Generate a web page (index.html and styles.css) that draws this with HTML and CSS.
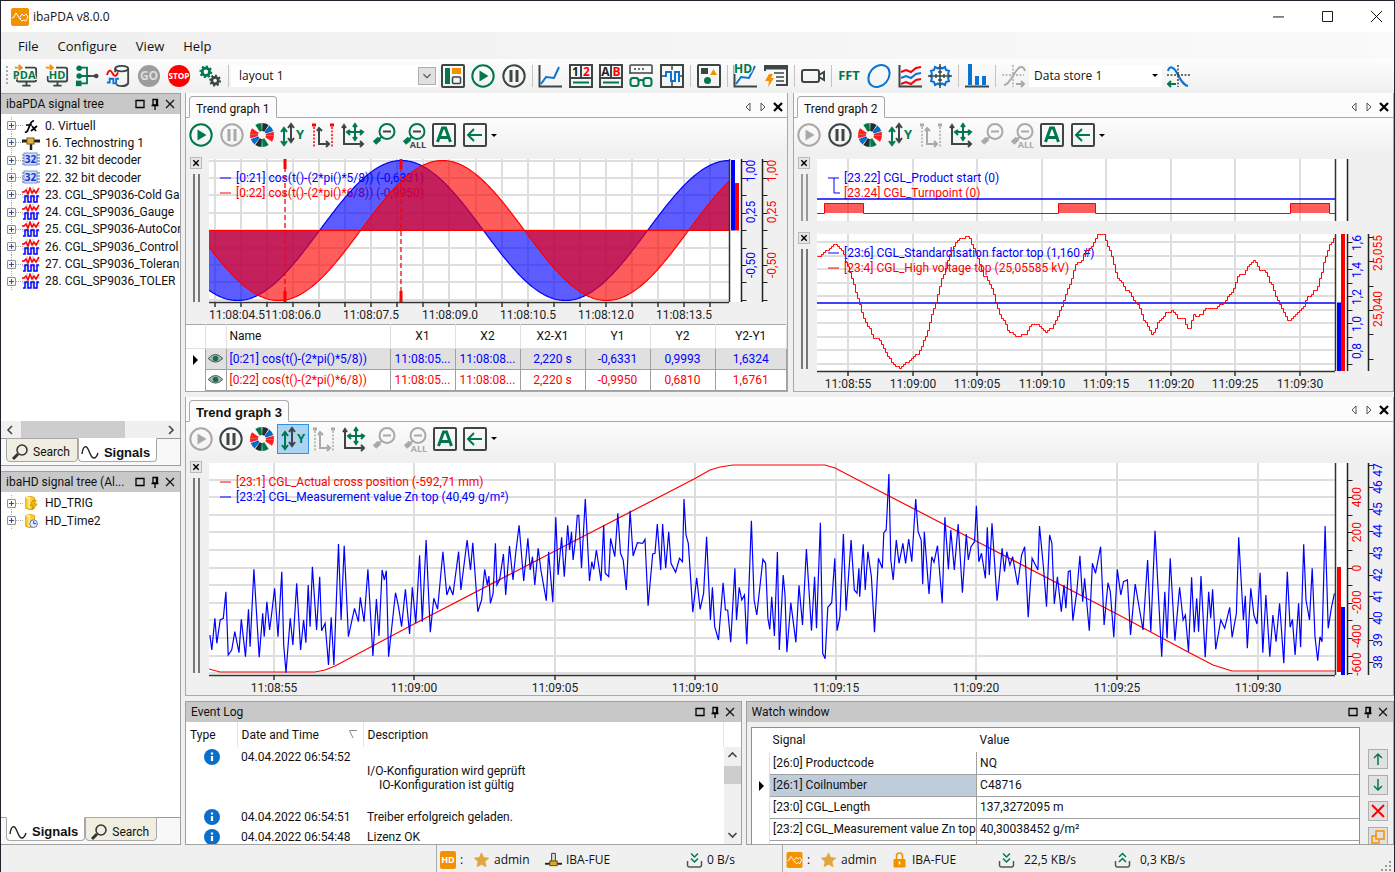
FILE: index.html
```html
<!DOCTYPE html>
<html lang="en">

<head>
    <meta charset="UTF-8">
    <title>ibaPDA v8.0.0</title>
    <link rel="stylesheet" href="styles.css">
</head>

<body>
    <!-- icon set -->
    <svg class="sprite" aria-hidden="true">
        <symbol id="logo" viewBox="0 0 18 18">
            <rect width="18" height="18" rx="2" fill="#f39200" />
            <path d="M1 10l2-1 2-4 2 3 2 3 1-1M9 9l2-3 2 2 2-2 2 3-2 4-2-1-2 1-2-2" fill="none" stroke="#fff" stroke-width="1" />
        </symbol>
        <symbol id="pda" viewBox="0 0 26 24">
            <path d="M12 3h10q2 0 2 2v11q0 2-2 2H5q-2 0-2-2v-4M9 22.500h9M13.500 18v4" class="k" />
            <path d="M1 3h7M5 0l3.500 3L5 6" class="o" />
            <text x="11" y="15" class="badge">PDA</text>
        </symbol>
        <symbol id="hd" viewBox="0 0 26 24">
            <path d="M12 3h10q2 0 2 2v11q0 2-2 2H5q-2 0-2-2v-4M9 22.500h9M13.500 18v4" class="k" />
            <path d="M1 3h7M5 0l3.500 3L5 6" class="o" />
            <text x="13" y="15" class="badge">HD</text>
        </symbol>
        <symbol id="io" viewBox="0 0 26 24">
            <path d="M4 3h9v17H5M4 12h12" class="g" />
            <path d="M14 12h8" class="k" />
            <circle cx="4.500" cy="3.500" r="3" class="gf" />
            <circle cx="4.500" cy="12" r="3" class="gf" />
            <rect x="1" y="17" width="6" height="6" class="gf" />
            <circle cx="23" cy="12" r="2.500" class="kf" />
        </symbol>
        <symbol id="store" viewBox="0 0 26 24">
            <ellipse cx="17" cy="4" rx="7" ry="3" class="k" />
            <path d="M24 4v16q-2 3-7 3-4 0-6-2M10 4v4" class="k" />
            <path d="M1 11c2-6 4-6 6-2s4 4 6-1" class="r" />
            <path d="M1 19h3v-4h4v5h3v-5h3" class="b" />
        </symbol>
        <symbol id="go" viewBox="0 0 26 24">
            <circle cx="13" cy="12" r="12" fill="#9d9d9d" />
            <text x="13" y="16.500" class="round-txt go-txt">GO</text>
        </symbol>
        <symbol id="stop" viewBox="0 0 26 24">
            <circle cx="13" cy="12" r="12" fill="#f00" />
            <text x="13" y="15.500" class="round-txt">STOP</text>
        </symbol>
        <symbol id="gears" viewBox="0 0 26 24">
            <circle cx="8.500" cy="7.500" r="4" class="g" stroke-width="3" />
            <circle cx="8.500" cy="7.500" r="6" class="g" stroke-width="2" pathLength="16" stroke-dasharray="1 1" />
            <circle cx="18.500" cy="17" r="3.500" class="k" stroke-width="3" />
            <circle cx="18.500" cy="17" r="5.500" class="k" stroke-width="2" pathLength="16" stroke-dasharray="1 1" />
        </symbol>
        <symbol id="layout" viewBox="0 0 24 24">
            <rect x="1" y="1" width="22" height="22" rx="1" class="k" />
            <rect x="4" y="4" width="5" height="16" class="gf" />
            <rect x="11" y="4" width="9" height="6" fill="#f39200" />
            <rect x="11.500" y="13" width="8" height="6.500" rx="1" class="k thin" />
        </symbol>
        <symbol id="play" viewBox="0 0 24 24">
            <circle cx="12" cy="12" r="10.700" class="g" />
            <path d="M8.500 6.500v11l9-5.500z" class="gf" />
        </symbol>
        <symbol id="pause" viewBox="0 0 24 24">
            <circle cx="12" cy="12" r="10.700" class="k" />
            <path d="M9 6v12M15 6v12" class="k" stroke-width="3" />
        </symbol>
        <symbol id="trend" viewBox="0 0 24 24">
            <path d="M1.500 1v21.500H24" class="k" />
            <path d="M3 20l5-7 8 1 5-11" class="b" />
        </symbol>
        <symbol id="digits" viewBox="0 0 24 24">
            <path d="M1 1h22v22H1zM1 14h22M12 1v13" class="k" />
            <text x="6.500" y="11.500" class="cell">1</text><text x="17.500" y="11.500" class="cell red">2</text>
            <path d="M4 18.500h16" class="g" />
        </symbol>
        <symbol id="letters" viewBox="0 0 24 24">
            <path d="M1 1h22v22H1zM1 14h22M12 1v13" class="k" />
            <text x="6.500" y="11.500" class="cell">A</text><text x="17.500" y="11.500" class="cell red">B</text>
            <path d="M4 18.500h16" class="g" />
        </symbol>
        <symbol id="glasses" viewBox="0 0 24 24">
            <path d="M1 10V2q0-1 1-1h20q1 0 1 1v8M1 9h22" class="k thin" />
            <path d="M5 5h2M9 5h2M13 5h2" class="k thin" />
            <rect x="1.500" y="14" width="8" height="8" rx="2.500" class="g" />
            <rect x="14.500" y="14" width="8" height="8" rx="2.500" class="g" />
            <path d="M9 17q3-2 6 0" class="g" />
        </symbol>
        <symbol id="scope" viewBox="0 0 24 24">
            <rect x="1" y="1" width="22" height="22" class="k" />
            <path d="M12 1v5M12 18v5M1 12h4M19 12h4" class="k thin" />
            <path d="M4 12h2V8h5v9h4V8h4v9h1" class="b" />
        </symbol>
        <symbol id="shapes" viewBox="0 0 24 24">
            <rect x="1" y="1" width="22" height="22" rx="1" class="k" />
            <rect x="4" y="4" width="7" height="6" class="kf" />
            <path d="M16.500 5l3.500 6h-7z" fill="#f39200" />
            <circle cx="10.500" cy="16.500" r="3.500" class="gf" />
        </symbol>
        <symbol id="hdtrend" viewBox="0 0 24 24">
            <path d="M1.500 1v21.500H24" class="k" />
            <path d="M3 20l5-7 8 1 6-12" class="b" />
            <text x="10" y="9" class="badge">HD</text>
        </symbol>
        <symbol id="hdevent" viewBox="0 0 24 24">
            <path d="M1 7V2h22v19H12" class="k" />
            <path d="M1 4h22" class="k" stroke-width="3" />
            <path d="M10 9h10M12 13h8M12 17h8" class="k thin" />
            <path d="M5 10H9L7 14h3l-6 9 1-6H1z" fill="#f39200" />
        </symbol>
        <symbol id="camera" viewBox="0 0 24 24">
            <rect x="1" y="6" width="17" height="12" rx="2" class="k" />
            <path d="M18 11l5-3v8l-5-3" class="k" />
        </symbol>
        <symbol id="fft" viewBox="0 0 26 24">
            <text x="13" y="16" class="fft-txt">FFT</text>
        </symbol>
        <symbol id="orbit" viewBox="0 0 24 24">
            <ellipse cx="12" cy="12" rx="12" ry="9.500" transform="rotate(-50 12 12)" class="b" />
        </symbol>
        <symbol id="waterfall" viewBox="0 0 24 24">
            <path d="M1.500 1v21.500H24" class="k" />
            <path d="M3 8l5-2 5 2 5-4 5-1M3 20l5-2 5 2 5-4 5-1" class="r" />
            <path d="M3 14l5-2 5 2 5-4 5-1" class="b" />
        </symbol>
        <symbol id="polar" viewBox="0 0 24 24">
            <path d="M12 3l2 1.500 3-1.500 1 3 3 1-1 3 1.500 2-1.500 2 1 3-3 1-1 3-3-1.500-2 1.500-2-1.500-3 1.500-1-3-3-1 1-3-1.500-2 1.500-2-1-3 3-1 1-3 3 1.500z" class="b" />
            <path d="M12 0v24M0 12h24M8 10v4M16 10v4M10 8h4M10 16h4" class="k thin" />
        </symbol>
        <symbol id="bars" viewBox="0 0 24 24">
            <path d="M0 22.500h24" class="k" />
            <path d="M5 0v21M12 12v9M19 12v9" class="b" stroke-width="4" />
        </symbol>
        <symbol id="replay" viewBox="0 0 24 24">
            <path d="M2 21C9 21 13 3 19 3q3 0 4 4" class="b" />
            <path d="M11 1v22M0 11h22" class="k thin" stroke-dasharray="2 1.500" />
            <path d="M14 20h8M19 17l3 3-3 3" class="g" />
        </symbol>
        <symbol id="replayback" viewBox="0 0 24 24">
            <path d="M2 7c1-6 6-4 9 2s6 12 11 13" class="b" />
            <path d="M12 1v22M1 11h23" class="k thin" stroke-dasharray="2 1.500" />
            <path d="M10 20H2M5 17l-3 3 3 3" class="g" />
        </symbol>
        <symbol id="wheel" viewBox="0 0 24 24">
            <g fill="none" stroke-width="8" transform="rotate(-90 12 12)">
                <circle cx="12" cy="12" r="8" pathLength="10" stroke="#1f2f2f" stroke-dasharray=".88 4.120" stroke-dashoffset="-.06" />
                <circle cx="12" cy="12" r="8" pathLength="10" stroke="#006fc9" stroke-dasharray=".88 4.120" stroke-dashoffset="-1.060" />
                <circle cx="12" cy="12" r="8" pathLength="10" stroke="#ff1f1f" stroke-dasharray=".88 4.120" stroke-dashoffset="-2.560" />
                <circle cx="12" cy="12" r="8" pathLength="10" stroke="#ff1f1f" stroke-dasharray=".5 4.500" stroke-dashoffset="-2.060" />
                <circle cx="12" cy="12" r="8" pathLength="10" stroke="#00784b" stroke-dasharray=".88 4.120" stroke-dashoffset="-4.060" />
            </g>
        </symbol>
        <symbol id="yscale" viewBox="0 0 24 24">
            <path d="M4 6v15M1 9l3-4 3 4M1 18l3 4 3-4" class="g" />
            <path d="M11 2v16M8 5l3-4 3 4M8 15l3 4 3-4" class="k" />
            <text x="20" y="16" class="axis-y">Y</text>
        </symbol>
        <symbol id="xrange" viewBox="0 0 24 24">
            <path d="M3 4v20M21 4v20" class="r thin" stroke-dasharray="2 1.500" />
            <path d="M1 2h4M19 2h4" class="r" stroke-width="3" />
            <path d="M8 5v16h10M6 8l2-3 3 3M15 18l3 3-3 3" class="k" />
        </symbol>
        <symbol id="move" viewBox="0 0 24 24">
            <path d="M3 2v19h19M1 5l2-3 2 3M19 18l3 3-3 3" class="k" />
            <path d="M14 2v15M6 9h16M12 4l2-3 2 3M12 14l2 3 2-3M9 7L6 9l3 3M19 7l3 2-3 3" class="g" />
        </symbol>
        <symbol id="zoomout" viewBox="0 0 24 24">
            <circle cx="15" cy="8.500" r="7.500" class="g" />
            <path d="M11 8.500h8" class="k" />
            <path d="M9.500 14L7 16" class="g" />
            <path d="M7.500 15.500L2.500 20" class="g" stroke-width="5" />
        </symbol>
        <symbol id="zoomall" viewBox="0 0 24 24">
            <circle cx="15" cy="8.500" r="7.500" class="g" />
            <path d="M11 8.500h8" class="k" />
            <path d="M9.500 14l-2 2" class="g" />
            <path d="M7.500 15.500L2.500 20" class="g" stroke-width="5" />
            <text x="16" y="25" class="all">ALL</text>
        </symbol>
        <symbol id="auto" viewBox="0 0 24 24">
            <rect x="1" y="1" width="22" height="22" rx="1" class="k" />
            <path d="M5.500 19l5-14h3l5 14M8 14.500h8" class="g" stroke-width="3" />
        </symbol>
        <symbol id="back" viewBox="0 0 24 24">
            <rect x="1" y="1" width="22" height="22" rx="1" class="k" />
            <path d="M5 12h14M11 6l-6 6 6 6" class="g" />
        </symbol>
        <symbol id="wmax" viewBox="0 0 12 12">
            <path d="M2 2.500h8v7H2z" fill="none" stroke="#000" stroke-width="1.300" />
        </symbol>
        <symbol id="pin" viewBox="0 0 12 12">
            <path d="M4 1.500h4.500V7H4zM2.500 7.500h7M6 7.500V12M7.500 2v5" fill="none" stroke="#000" stroke-width="1.300" />
        </symbol>
        <symbol id="cross" viewBox="0 0 12 12">
            <path d="M2 2l8 8M10 2l-8 8" fill="none" stroke="currentColor" stroke-width="1.200" />
        </symbol>
        <symbol id="xbold" viewBox="0 0 12 12">
            <path d="M2 2l8 8M10 2l-8 8" fill="none" stroke="#000" stroke-width="2.200" />
        </symbol>
        <symbol id="tri-left" viewBox="0 0 12 12">
            <path d="M8 2v8L4 6z" fill="none" stroke="#555" />
        </symbol>
        <symbol id="tri-right" viewBox="0 0 12 12">
            <path d="M4 2v8l4-4z" fill="none" stroke="#555" />
        </symbol>
        <symbol id="fx" viewBox="0 0 18 16">
            <path d="M3 14c4 2 4-12 9-11M4 7h6M10 8l4 5M15 8l-6 5" fill="none" stroke="#000" stroke-width="1.700" />
        </symbol>
        <symbol id="techno" viewBox="0 0 18 16">
            <path d="M0 6h18" stroke="#222" stroke-width="3" />
            <path d="M9 8v7" stroke="#222" stroke-width="2.500" />
            <rect x="5" y="3" width="7" height="6" fill="#e3b341" stroke="#7c5a10" />
        </symbol>
        <symbol id="dec32" viewBox="0 0 18 16">
            <path d="M0 3h18M0 6h18M0 9h18M0 12h18" stroke="#46628c" />
            <rect x="2" y="1" width="13" height="12" fill="#cfe0fa" stroke="#7d95c4" />
            <text x="8.500" y="11" class="dec">32</text>
        </symbol>
        <symbol id="signals" viewBox="0 0 18 16">
            <path d="M5 0v16M11 0v16M0 5h18M0 10h18" stroke="#bbb" />
            <path d="M0 5h2l2-2 2 4 2-6 2 5 2-3 2 3 3-5" fill="none" stroke="#f00" stroke-width="1.500" />
            <path d="M1 15h2V9h3v6h3V9h3v6h3V9h2" fill="none" stroke="#00f" stroke-width="1.500" />
        </symbol>
        <symbol id="dbtrig" viewBox="0 0 18 18">
            <path d="M3 3q5-3 10 0v12q-5 3-10 0z" fill="#fc3" stroke="#e0a000" />
            <path d="M4 4q1-1 3-1v12" fill="none" stroke="#fff0a0" stroke-width="2" />
            <path d="M11 6L8 12h3l-1 5 6-7h-3l2-4z" fill="#f5b800" stroke="#a88400" stroke-width=".7" />
        </symbol>
        <symbol id="dbtime" viewBox="0 0 18 18">
            <path d="M3 3q5-3 10 0v12q-5 3-10 0z" fill="#fc3" stroke="#e0a000" />
            <path d="M4 4q1-1 3-1v12" fill="none" stroke="#fff0a0" stroke-width="2" />
            <circle cx="12" cy="12" r="4.300" fill="#e8efff" stroke="#5568b8" />
            <path d="M12 9v3h3" fill="none" stroke="#334" />
        </symbol>
        <symbol id="search" viewBox="0 0 18 18">
            <circle cx="11" cy="7" r="5" fill="none" stroke="#333" stroke-width="1.500" />
            <path d="M7 11l-5 5" stroke="#333" stroke-width="3" />
        </symbol>
        <symbol id="sine" viewBox="0 0 18 18">
            <path d="M1 11C2 3 5 2 7 6c3 6 3 9 6 9 2 0 3-2 4-5" fill="none" stroke="#222" stroke-width="1.400" />
        </symbol>
        <symbol id="eye" viewBox="0 0 16 12">
            <path d="M0 6q8-9 16 0-8 8-16 0z" fill="#9fb8b0" stroke="#44564f" />
            <circle cx="8" cy="6" r="3" fill="#1b6b50" />
        </symbol>
        <symbol id="info" viewBox="0 0 16 16">
            <circle cx="8" cy="8" r="8" fill="#0a6fca" />
            <path d="M8 7v5M8 3.500v2" stroke="#fff" stroke-width="2.200" />
        </symbol>
        <symbol id="star" viewBox="0 0 18 18">
            <path d="M9 1l2.400 5.300 5.600.6-4.200 3.900 1.200 5.700L9 13.700 4 16.500l1.200-5.700L1 6.900l5.600-.6z" fill="#e3a63c" stroke="#e3a63c" />
        </symbol>
        <symbol id="net" viewBox="0 0 18 16">
            <path d="M0 12h18" stroke="#222" stroke-width="2" />
            <path d="M7 1h4v9H7z" fill="#ddd" stroke="#333" />
            <path d="M5 9h8v5H5z" fill="#dfa524" stroke="#5f4300" />
        </symbol>
        <symbol id="lock" viewBox="0 0 14 16">
            <path d="M4 8V4q0-3 3-3t3 3v4" fill="none" stroke="#f39200" stroke-width="1.600" />
            <rect x="1" y="7" width="12" height="8.500" rx="1" fill="#f39200" />
            <path d="M7 9.500v3" stroke="#fff" stroke-width="1.500" />
        </symbol>
        <symbol id="down" viewBox="0 0 16 16">
            <path d="M1 9v4q0 2 2 2h10q2 0 2-2V9" fill="none" stroke="#555" stroke-width="1.500" />
            <path d="M4.500 1.500L8 5l3.500-3.500M4.500 6.500L8 10l3.500-3.500" fill="none" stroke="#00784b" stroke-width="1.500" />
        </symbol>
        <symbol id="up" viewBox="0 0 16 16">
            <path d="M1 9v4q0 2 2 2h10q2 0 2-2V9" fill="none" stroke="#555" stroke-width="1.500" />
            <path d="M4.500 5L8 1.500 11.500 5M4.500 10L8 6.500l3.500 3.500" fill="none" stroke="#00784b" stroke-width="1.500" />
        </symbol>
    </svg>

    <div class="window">
        <header class="titlebar">
            <svg class="app-logo"><use href="#logo" /></svg>
            <span class="app-name">ibaPDA v8.0.0</span>
            <button class="win-btn" aria-label="Minimize"><svg viewBox="0 0 12 12"><path d="M0 6.500h12" stroke="#000" /></svg></button>
            <button class="win-btn" aria-label="Maximize"><svg viewBox="0 0 12 12"><path d="M.5.500h11v11H.5z" fill="none" stroke="#000" /></svg></button>
            <button class="win-btn" aria-label="Close"><svg viewBox="0 0 12 12"><path d="M0 0l12 12M12 0L0 12" stroke="#000" /></svg></button>
        </header>

        <nav class="menubar">
            <button>File</button>
            <button>Configure</button>
            <button>View</button>
            <button>Help</button>
        </nav>

        <div class="toolbar">
            <span class="dots"></span>
            <div class="group seven">
                <button class="tool" aria-label="PDA"><svg><use href="#pda" /></svg></button>
                <button class="tool" aria-label="HD"><svg><use href="#hd" /></svg></button>
                <button class="tool" aria-label="I/O manager"><svg><use href="#io" /></svg></button>
                <button class="tool" aria-label="Data storage"><svg><use href="#store" /></svg></button>
                <button class="tool" aria-label="Go"><svg><use href="#go" /></svg></button>
                <button class="tool" aria-label="Stop"><svg><use href="#stop" /></svg></button>
                <button class="tool" aria-label="Settings"><svg><use href="#gears" /></svg></button>
            </div>
            <span class="sep"></span>
            <div class="combo layout-combo">
                <select aria-label="Layout"><option>layout 1</option></select>
                <svg class="combo-box" viewBox="0 0 18 18"><path d="M5 7l4 4 4-4" fill="none" stroke="#555" stroke-width="1.300" /></svg>
            </div>
            <div class="group three">
                <button class="tool" aria-label="Layouts"><svg><use href="#layout" /></svg></button>
                <button class="tool" aria-label="Start"><svg><use href="#play" /></svg></button>
                <button class="tool" aria-label="Pause"><svg><use href="#pause" /></svg></button>
            </div>
            <span class="sep"></span>
            <div class="group five">
                <button class="tool" aria-label="Trend graph"><svg><use href="#trend" /></svg></button>
                <button class="tool" aria-label="Digital meter"><svg><use href="#digits" /></svg></button>
                <button class="tool" aria-label="Text view"><svg><use href="#letters" /></svg></button>
                <button class="tool" aria-label="Watch"><svg><use href="#glasses" /></svg></button>
                <button class="tool" aria-label="Scope"><svg><use href="#scope" /></svg></button>
            </div>
            <span class="sep"></span>
            <div class="group one"><button class="tool" aria-label="Panel"><svg><use href="#shapes" /></svg></button></div>
            <span class="sep"></span>
            <div class="group two">
                <button class="tool" aria-label="HD trend"><svg><use href="#hdtrend" /></svg></button>
                <button class="tool" aria-label="HD events"><svg><use href="#hdevent" /></svg></button>
            </div>
            <span class="sep"></span>
            <div class="group one"><button class="tool" aria-label="Camera"><svg><use href="#camera" /></svg></button></div>
            <span class="sep"></span>
            <div class="group four">
                <button class="tool" aria-label="FFT"><svg><use href="#fft" /></svg></button>
                <button class="tool" aria-label="Orbit"><svg><use href="#orbit" /></svg></button>
                <button class="tool" aria-label="Waterfall"><svg><use href="#waterfall" /></svg></button>
                <button class="tool" aria-label="Polar"><svg><use href="#polar" /></svg></button>
            </div>
            <span class="sep"></span>
            <div class="group one"><button class="tool" aria-label="Bars"><svg><use href="#bars" /></svg></button></div>
            <span class="sep"></span>
            <div class="group one"><button class="tool off" aria-label="Forward"><svg><use href="#replay" /></svg></button></div>
            <div class="combo store-combo">
                <select aria-label="Data store"><option>Data store 1</option></select>
                <span class="caret"></span>
            </div>
            <div class="group one"><button class="tool" aria-label="Backward"><svg><use href="#replayback" /></svg></button></div>
        </div>

        <main class="workspace">
            <aside class="sidebar">
                <section class="panel tree-panel">
                    <div class="panel-head">
                        <h2>ibaPDA signal tree</h2>
                        <button aria-label="Float"><svg><use href="#wmax" /></svg></button>
                        <button aria-label="Pin"><svg><use href="#pin" /></svg></button>
                        <button aria-label="Close"><svg><use href="#cross" /></svg></button>
                    </div>
                    <ul class="tree tree-long">
                        <li><button class="plus" aria-label="Expand"></button><svg><use href="#fx" /></svg>0. Virtuell</li>
                        <li><button class="plus" aria-label="Expand"></button><svg><use href="#techno" /></svg>16. Technostring 1</li>
                        <li><button class="plus" aria-label="Expand"></button><svg><use href="#dec32" /></svg>21. 32 bit decoder</li>
                        <li><button class="plus" aria-label="Expand"></button><svg><use href="#dec32" /></svg>22. 32 bit decoder</li>
                        <li><button class="plus" aria-label="Expand"></button><svg><use href="#signals" /></svg>23. CGL_SP9036-Cold Ga</li>
                        <li><button class="plus" aria-label="Expand"></button><svg><use href="#signals" /></svg>24. CGL_SP9036_Gauge</li>
                        <li><button class="plus" aria-label="Expand"></button><svg><use href="#signals" /></svg>25. CGL_SP9036-AutoCor</li>
                        <li><button class="plus" aria-label="Expand"></button><svg><use href="#signals" /></svg>26. CGL_SP9036_Control</li>
                        <li><button class="plus" aria-label="Expand"></button><svg><use href="#signals" /></svg>27. CGL_SP9036_Toleran</li>
                        <li><button class="plus" aria-label="Expand"></button><svg><use href="#signals" /></svg>28. CGL_SP9036_TOLER</li>
                    </ul>
                    <div class="hscroll">
                        <svg viewBox="0 0 17 17"><path d="M11 5L7 9l4 4" /></svg>
                        <span class="hthumb"></span>
                        <svg viewBox="0 0 17 17"><path d="M6 5l4 4-4 4" /></svg>
                    </div>
                    <div class="bottom-tabs">
                        <button class="search-tab"><svg><use href="#search" /></svg>Search</button>
                        <button class="current"><svg><use href="#sine" /></svg>Signals</button>
                    </div>
                </section>

                <section class="panel tree-panel">
                    <div class="panel-head">
                        <h2>ibaHD signal tree (Al...</h2>
                        <button aria-label="Float"><svg><use href="#wmax" /></svg></button>
                        <button aria-label="Pin"><svg><use href="#pin" /></svg></button>
                        <button aria-label="Close"><svg><use href="#cross" /></svg></button>
                    </div>
                    <ul class="tree tree-short">
                        <li><button class="plus" aria-label="Expand"></button><svg><use href="#dbtrig" /></svg>HD_TRIG</li>
                        <li><button class="plus" aria-label="Expand"></button><svg><use href="#dbtime" /></svg>HD_Time2</li>
                    </ul>
                    <div class="bottom-tabs">
                        <button class="current"><svg><use href="#sine" /></svg>Signals</button>
                        <button class="search-tab"><svg><use href="#search" /></svg>Search</button>
                    </div>
                </section>
            </aside>

            <div class="docs">
                <div class="row top-row">
                    <section class="doc trend1">
                        <div class="doc-tabs">
                            <button class="doc-tab">Trend graph 1</button>
                            <button class="nav" aria-label="Previous"><svg><use href="#tri-left" /></svg></button>
                            <button class="nav" aria-label="Next"><svg><use href="#tri-right" /></svg></button>
                            <button class="nav" aria-label="Close"><svg><use href="#xbold" /></svg></button>
                        </div>
                        <div class="graph-tools">
                            <button class="tool" aria-label="Start"><svg><use href="#play" /></svg></button>
                            <button class="tool off" aria-label="Pause"><svg><use href="#pause" /></svg></button>
                            <button class="tool" aria-label="Colors"><svg><use href="#wheel" /></svg></button>
                            <button class="tool" aria-label="Scale Y"><svg><use href="#yscale" /></svg></button>
                            <button class="tool" aria-label="Markers"><svg><use href="#xrange" /></svg></button>
                            <button class="tool" aria-label="Move"><svg><use href="#move" /></svg></button>
                            <button class="tool" aria-label="Zoom out"><svg><use href="#zoomout" /></svg></button>
                            <button class="tool" aria-label="Zoom out all"><svg><use href="#zoomall" /></svg></button>
                            <button class="tool" aria-label="Autoscale"><svg><use href="#auto" /></svg></button>
                            <button class="tool" aria-label="Back"><svg><use href="#back" /></svg></button>
                            <span class="caret"></span>
                        </div>
                        <div class="graph">
                            <div class="grip"><button aria-label="Close graph"><svg><use href="#xbold" /></svg></button></div>
                            <svg class="plot" id="chart1"></svg>
                        </div>
                        <table class="markers">
                            <colgroup><col class="c-arrow"><col class="c-eye"><col class="c-name"><col class="c-val"><col class="c-val"><col class="c-val"><col class="c-val"><col class="c-val"><col></colgroup>
                            <thead>
                                <tr><th></th><th></th><th class="left">Name</th><th>X1</th><th>X2</th><th>X2-X1</th><th>Y1</th><th>Y2</th><th>Y2-Y1</th></tr>
                            </thead>
                            <tbody>
                                <tr class="picked blue"><td class="plain"><span class="mark"></span></td><td><svg><use href="#eye" /></svg></td><td class="left">[0:21] cos(t()-(2*pi()*5/8))</td><td>11:08:05...</td><td>11:08:08...</td><td>2,220 s</td><td>-0,6331</td><td>0,9993</td><td>1,6324</td></tr>
                                <tr class="red"><td class="plain"></td><td><svg><use href="#eye" /></svg></td><td class="left">[0:22] cos(t()-(2*pi()*6/8))</td><td>11:08:05...</td><td>11:08:08...</td><td>2,220 s</td><td>-0,9950</td><td>0,6810</td><td>1,6761</td></tr>
                            </tbody>
                        </table>
                    </section>

                    <section class="doc trend2">
                        <div class="doc-tabs">
                            <button class="doc-tab">Trend graph 2</button>
                            <button class="nav" aria-label="Previous"><svg><use href="#tri-left" /></svg></button>
                            <button class="nav" aria-label="Next"><svg><use href="#tri-right" /></svg></button>
                            <button class="nav" aria-label="Close"><svg><use href="#xbold" /></svg></button>
                        </div>
                        <div class="graph-tools">
                            <button class="tool off" aria-label="Start"><svg><use href="#play" /></svg></button>
                            <button class="tool" aria-label="Pause"><svg><use href="#pause" /></svg></button>
                            <button class="tool" aria-label="Colors"><svg><use href="#wheel" /></svg></button>
                            <button class="tool" aria-label="Scale Y"><svg><use href="#yscale" /></svg></button>
                            <button class="tool off" aria-label="Markers"><svg><use href="#xrange" /></svg></button>
                            <button class="tool" aria-label="Move"><svg><use href="#move" /></svg></button>
                            <button class="tool off" aria-label="Zoom out"><svg><use href="#zoomout" /></svg></button>
                            <button class="tool off" aria-label="Zoom out all"><svg><use href="#zoomall" /></svg></button>
                            <button class="tool" aria-label="Autoscale"><svg><use href="#auto" /></svg></button>
                            <button class="tool" aria-label="Back"><svg><use href="#back" /></svg></button>
                            <span class="caret"></span>
                        </div>
                        <div class="graph digital">
                            <div class="grip"><button aria-label="Close graph"><svg><use href="#xbold" /></svg></button></div>
                            <svg class="plot" id="chart2a"></svg>
                        </div>
                        <div class="graph">
                            <div class="grip"><button aria-label="Close graph"><svg><use href="#xbold" /></svg></button></div>
                            <svg class="plot" id="chart2b"></svg>
                        </div>
                    </section>
                </div>

                <section class="doc trend3">
                    <div class="doc-tabs">
                        <button class="doc-tab bold">Trend graph 3</button>
                        <button class="nav" aria-label="Previous"><svg><use href="#tri-left" /></svg></button>
                        <button class="nav" aria-label="Next"><svg><use href="#tri-right" /></svg></button>
                        <button class="nav" aria-label="Close"><svg><use href="#xbold" /></svg></button>
                    </div>
                    <div class="graph-tools">
                        <button class="tool off" aria-label="Start"><svg><use href="#play" /></svg></button>
                        <button class="tool" aria-label="Pause"><svg><use href="#pause" /></svg></button>
                        <button class="tool" aria-label="Colors"><svg><use href="#wheel" /></svg></button>
                        <button class="tool active" aria-label="Scale Y"><svg><use href="#yscale" /></svg></button>
                        <button class="tool off" aria-label="Markers"><svg><use href="#xrange" /></svg></button>
                        <button class="tool" aria-label="Move"><svg><use href="#move" /></svg></button>
                        <button class="tool off" aria-label="Zoom out"><svg><use href="#zoomout" /></svg></button>
                        <button class="tool off" aria-label="Zoom out all"><svg><use href="#zoomall" /></svg></button>
                        <button class="tool" aria-label="Autoscale"><svg><use href="#auto" /></svg></button>
                        <button class="tool" aria-label="Back"><svg><use href="#back" /></svg></button>
                        <span class="caret"></span>
                    </div>
                    <div class="graph">
                        <div class="grip"><button aria-label="Close graph"><svg><use href="#xbold" /></svg></button></div>
                        <svg class="plot" id="chart3"></svg>
                    </div>
                </section>

                <div class="row bottom-row">
                    <section class="panel event-log">
                        <div class="panel-head">
                            <h2>Event Log</h2>
                            <button aria-label="Float"><svg><use href="#wmax" /></svg></button>
                            <button aria-label="Pin"><svg><use href="#pin" /></svg></button>
                            <button aria-label="Close"><svg><use href="#cross" /></svg></button>
                        </div>
                        <div class="log-body">
                            <table class="log">
                                <colgroup><col class="c-type"><col class="c-date"><col></colgroup>
                                <thead>
                                    <tr><th>Type</th><th>Date and Time<svg class="sort" viewBox="0 0 8 9"><path d="M8 .500H.5L4 8" fill="none" stroke="#888" /></svg></th><th>Description</th></tr>
                                </thead>
                                <tbody>
                                    <tr class="tall"><td><svg><use href="#info" /></svg></td><td>04.04.2022 06:54:52</td><td class="pre">&nbsp;
I/O-Konfiguration wird geprüft
    IO-Konfiguration ist gültig</td></tr>
                                    <tr><td><svg><use href="#info" /></svg></td><td>04.04.2022 06:54:51</td><td>Treiber erfolgreich geladen.</td></tr>
                                    <tr><td><svg><use href="#info" /></svg></td><td>04.04.2022 06:54:48</td><td>Lizenz OK</td></tr>
                                </tbody>
                            </table>
                            <div class="vscroll">
                                <svg viewBox="0 0 16 17"><path d="M4 10l4-4 4 4" /></svg>
                                <span class="vthumb"></span>
                                <svg viewBox="0 0 16 17"><path d="M4 6l4 4 4-4" /></svg>
                            </div>
                        </div>
                    </section>

                    <section class="panel watch">
                        <div class="panel-head">
                            <h2>Watch window</h2>
                            <button aria-label="Float"><svg><use href="#wmax" /></svg></button>
                            <button aria-label="Pin"><svg><use href="#pin" /></svg></button>
                            <button aria-label="Close"><svg><use href="#cross" /></svg></button>
                        </div>
                        <div class="watch-body">
                            <div class="watch-grid">
                                <table>
                                    <colgroup><col class="c-mark"><col class="c-signal"><col></colgroup>
                                    <thead>
                                        <tr><th></th><th>Signal</th><th>Value</th></tr>
                                    </thead>
                                    <tbody>
                                        <tr><td class="gutter"></td><td>[26:0] Productcode</td><td>NQ</td></tr>
                                        <tr class="picked"><td class="gutter"><span class="mark"></span></td><td>[26:1] Coilnumber</td><td>C48716</td></tr>
                                        <tr><td class="gutter"></td><td>[23:0] CGL_Length</td><td>137,3272095 m</td></tr>
                                        <tr><td class="gutter"></td><td>[23:2] CGL_Measurement value Zn top</td><td>40,30038452 g/m²</td></tr>
                                        <tr><td class="gutter"></td><td></td><td></td></tr>
                                    </tbody>
                                </table>
                            </div>
                            <div class="watch-btns">
                                <button aria-label="Up"><svg viewBox="0 0 16 16"><path d="M8 14V3M4 7l4-4 4 4" class="g thin" /></svg></button>
                                <button aria-label="Down"><svg viewBox="0 0 16 16"><path d="M8 2v11M4 9l4 4 4-4" class="g thin" /></svg></button>
                                <button aria-label="Delete"><svg viewBox="0 0 16 16"><path d="M2 2l12 12M14 2L2 14" class="r" /></svg></button>
                                <button aria-label="Copy"><svg viewBox="0 0 16 16"><path d="M6 2h8v8H6zM6 7H2v7h7v-4" class="o thin" /></svg></button>
                            </div>
                        </div>
                    </section>
                </div>
            </div>
        </main>

        <footer class="statusbar">
            <div class="status-part hd-part">
                <span class="hd-badge">HD</span><span class="colon">:</span>
                <svg><use href="#star" /></svg><span class="user">admin</span>
                <svg><use href="#net" /></svg><span class="host">IBA-FUE</span>
                <svg><use href="#down" /></svg><span>0 B/s</span>
            </div>
            <div class="status-part pda-part">
                <svg><use href="#logo" /></svg><span class="colon">:</span>
                <svg><use href="#star" /></svg><span class="user">admin</span>
                <svg><use href="#lock" /></svg><span class="host">IBA-FUE</span>
                <svg><use href="#down" /></svg><span class="rate">22,5 KB/s</span>
                <svg><use href="#up" /></svg><span class="rate">0,3 KB/s</span>
            </div>
            <svg class="resize" viewBox="0 0 12 12"><path d="M10 1v2M10 5v2M6 5v2M10 9v2M6 9v2M2 9v2" stroke="#999" stroke-width="2" /></svg>
        </footer>
    </div>

    <script src="charts.js"></script>
</body>

</html>
```

FILE: styles.css
```css
* {
    box-sizing: border-box;
}

body {
    margin: 0;
    font-family: Roboto, "Liberation Sans", sans-serif;
    font-size: 12px;
    color: #111;
    --g: #00784b;
    --k: #3c4646;
    --r: #f00;
    --b: #0a74d4;
    --o: #f39200;
}

button {
    font: inherit;
    color: inherit;
    background: none;
    border: none;
    padding: 0;
    margin: 0;
}

svg {
    display: block;
    flex: none;
}

symbol {
    overflow: visible;
}

h2 {
    margin: 0;
    font-size: 12px;
    font-weight: normal;
}

table {
    border-collapse: collapse;
    table-layout: fixed;
    width: 100%;
}

.sprite {
    display: none;
}

/* icon strokes and fills */
.g, .k, .r, .b, .o {
    fill: none;
    stroke-width: 2;
}

.g { stroke: var(--g); }
.k { stroke: var(--k); }
.r { stroke: var(--r); }
.b { stroke: var(--b); }
.o { stroke: var(--o); }
.gf { fill: var(--g); }
.kf { fill: var(--k); }
.thin { stroke-width: 1.5; }
.g[stroke-width="3"], .k[stroke-width="3"], .r[stroke-width="3"] { stroke-width: 3; }
.b[stroke-width="4"] { stroke-width: 4; }
.g[stroke-width="5"] { stroke-width: 5; }

.badge, .round-txt, .cell, .fft-txt, .axis-y, .all, .dec {
    font-family: "Open Sans", sans-serif;
    font-weight: bold;
    text-anchor: middle;
}

.badge {
    font-size: 12px;
    fill: var(--g);
    stroke: #fafafa;
    stroke-width: 2px;
    paint-order: stroke;
}

.round-txt { font-size: 9px; fill: #fff; }
.go-txt { font-size: 13px; fill: #ddd; }
.cell { font-size: 12px; fill: #222; }
.cell.red { fill: #f00; }
.fft-txt { font-size: 14px; fill: var(--g); }
.axis-y { font-size: 13px; fill: var(--g); }
.all { font-size: 9px; fill: var(--k); }
.dec { font-size: 10px; fill: #1535d0; }

.window {
    display: flex;
    flex-direction: column;
    height: 100vh;
    border: 1px solid #22222c;
    border-bottom: none;
    background: #f0f0f0;
    overflow: hidden;
}

/* title and menu */
.titlebar {
    display: flex;
    align-items: center;
    height: 31px;
    padding-left: 10px;
    background: #fff;
    font-family: "Open Sans", sans-serif;
}

.app-logo {
    width: 18px;
    height: 18px;
    margin-right: 4px;
}

.app-name {
    flex: 1;
}

.win-btn {
    display: flex;
    align-items: center;
    justify-content: center;
    width: 36px;
    height: 31px;
    margin-left: 13px;
}

.win-btn svg {
    width: 11px;
    height: 11px;
}

.menubar {
    display: flex;
    gap: 19px;
    height: 27px;
    padding-left: 17px;
    background: linear-gradient(90deg, #efefef, #fafafa);
    font-family: "Open Sans", sans-serif;
    font-size: 13px;
}

/* main toolbar */
.toolbar {
    display: flex;
    align-items: center;
    height: 33px;
    padding-left: 5px;
    background: linear-gradient(#fdfdfd, #f0f0f0);
    font-family: "Open Sans", sans-serif;
}

.dots {
    width: 2px;
    height: 20px;
    margin-right: 3px;
    background: repeating-linear-gradient(#aaa 0 2px, transparent 2px 4px);
}

.group {
    display: flex;
    flex: none;
}

.seven { width: 214px; }
.five { width: 152px; }
.four { width: 121px; }
.three { width: 91px; }
.two { width: 61px; }
.one { width: 31px; }

.tool {
    flex: 1;
    display: flex;
    align-items: center;
    justify-content: center;
    height: 30px;
}

.tool svg {
    width: 24px;
    height: 24px;
    overflow: visible;
}

.off {
    --g: #a9a9a9;
    --k: #a9a9a9;
    --r: #a9a9a9;
    --b: #a9a9a9;
}

.tool.active {
    background: #abd4f3;
    border: 1px solid #3390df;
}

.sep {
    width: 1px;
    height: 22px;
    margin: 0 2px 0 3px;
    background: #c4c4c4;
}

.combo {
    display: flex;
    align-items: center;
    height: 22px;
    background: #fff;
}

.combo select {
    flex: 1;
    height: 22px;
    border: none;
    background: none;
    appearance: none;
    font: inherit;
    color: inherit;
}

.layout-combo {
    width: 207px;
}

.layout-combo select {
    padding-left: 8px;
}

.combo-box {
    width: 18px;
    height: 18px;
    margin-right: 2px;
    background: #e1e1e1;
    border: 1px solid #adadad;
}

.store-combo {
    width: 133px;
    padding-right: 4px;
}

.store-combo select {
    padding-left: 5px;
}

.caret {
    border: 3px solid transparent;
    border-top-color: #000;
    border-bottom: none;
}

/* workspace */
.workspace {
    display: flex;
    flex: 1;
    min-height: 0;
    gap: 4px;
    padding-top: 1px;
}

.sidebar {
    display: flex;
    flex-direction: column;
    flex: none;
    gap: 5px;
    width: 180px;
}

.panel {
    display: flex;
    flex-direction: column;
    min-width: 0;
    background: #fff;
    border: 1px solid #a0a0a0;
    border-left: none;
}

.tree-panel {
    flex: 371 1 0;
}

.tree-panel + .tree-panel {
    flex-grow: 373;
}

.panel-head {
    display: flex;
    align-items: center;
    flex: none;
    height: 20px;
    padding: 0 3px 0 5px;
    background: #c8c8c8;
}

.panel-head h2 {
    flex: 1;
    white-space: nowrap;
    overflow: hidden;
}

.panel-head button {
    width: 15px;
}

.panel-head svg, .nav svg {
    width: 12px;
    height: 12px;
    margin: auto;
}

.tree {
    display: flex;
    flex-direction: column;
    margin: 3px 0 auto;
    padding: 0;
    list-style: none;
    overflow: hidden;
    white-space: nowrap;
}

.tree-long { height: 173px; }
.tree-short { height: 35px; }

.tree li {
    display: flex;
    flex: 1;
    align-items: center;
    background:
        repeating-linear-gradient(#aaa 0 1px, transparent 1px 2px) 10px 0 / 1px 100% no-repeat,
        repeating-linear-gradient(90deg, #aaa 0 1px, transparent 1px 2px) 15px 50% / 7px 1px no-repeat;
}

.tree li svg {
    width: 18px;
    height: 16px;
    margin: 0 5px 0 6px;
}

.plus {
    flex: none;
    width: 9px;
    height: 9px;
    margin-left: 6px;
    border: 1px solid #919191;
    border-radius: 1px;
    background:
        linear-gradient(#2b4fa8, #2b4fa8) center / 5px 1px no-repeat,
        linear-gradient(#2b4fa8, #2b4fa8) center / 1px 5px no-repeat,
        #f6f6f6;
}

.hscroll {
    display: flex;
    height: 17px;
    background: #f0f0f0;
}

.hscroll svg, .vscroll svg {
    width: 17px;
    height: 17px;
    fill: none;
    stroke: #444;
    stroke-width: 1.6;
}

.hscroll svg:last-child {
    margin-left: auto;
}

.hthumb {
    width: 104px;
    margin-left: 3px;
    background: #cdcdcd;
}

.bottom-tabs {
    display: flex;
    flex: none;
    height: 27px;
    padding: 0 0 3px 5px;
    background: linear-gradient(#999, #999) 0 0 / 100% 1px no-repeat #f8f8f8;
}

.bottom-tabs button {
    display: flex;
    align-items: center;
    gap: 4px;
    padding: 5px 7px 0 4px;
    border: 1px solid #a8a8a8;
    border-radius: 0 0 4px 4px;
    background: #efeee0;
}

.bottom-tabs button.current {
    gap: 5px;
    padding: 5px 6px 0 2px;
    border-top-color: #fff;
    background: #fff;
}

.bottom-tabs .current, .doc-tab.bold {
    font-family: "Liberation Sans", sans-serif;
    font-size: 13px;
    font-weight: bold;
}

.bottom-tabs svg {
    width: 18px;
    height: 18px;
}

.docs {
    display: flex;
    flex-direction: column;
    flex: 1;
    min-width: 0;
    gap: 5px;
}

.row {
    display: flex;
    min-height: 0;
    gap: 5px;
}

.top-row { flex: 299 0 0; }
.trend3 { flex: 299 0 0; }
.bottom-row { flex: 144 0 0; gap: 4px; }

/* trend graph windows */
.doc {
    display: flex;
    flex-direction: column;
    min-width: 0;
    min-height: 0;
    border: 1px solid #a8a8a8;
    border-top: none;
    background: linear-gradient(#fcfcfc, #f0f0f0 36px) 0 25px no-repeat #f0f0f0;
}

.trend1 { flex: 603 1 0; }
.trend2 { flex: 601 1 0; }

.doc-tabs {
    display: flex;
    flex: none;
    align-items: center;
    height: 25px;
    padding-right: 2px;
    background: linear-gradient(#a8a8a8, #a8a8a8) 0 100% / 100% 1px no-repeat #fcfcfc;
}

.doc-tab {
    height: 22px;
    margin: 3px auto 0 3px;
    padding: 4px 6px 0;
    border: 1px solid #a8a8a8;
    border-bottom-color: #fcfcfc;
    border-radius: 4px 4px 0 0;
    background: #fcfcfc;
}

.nav {
    width: 15px;
    padding-top: 2px;
}

.graph-tools {
    display: flex;
    flex: none;
    align-items: center;
    width: 311px;
    height: 34px;
}

.graph-tools .caret {
    margin-left: 1px;
}

.graph {
    display: flex;
    flex: 1;
    min-height: 0;
    padding-top: 7px;
}

.digital {
    flex: none;
    height: 75px;
    padding-bottom: 6px;
}

.grip {
    flex: none;
    width: 23px;
    padding-left: 4px;
    background:
        linear-gradient(#777, #777) 7px 15px / 2px calc(100% - 37px) no-repeat,
        linear-gradient(#777, #777) 12px 15px / 2px calc(100% - 37px) no-repeat;
}

.digital .grip {
    background:
        linear-gradient(#999, #999) 7px 15px / 2px calc(100% - 15px) no-repeat,
        linear-gradient(#999, #999) 12px 15px / 2px calc(100% - 15px) no-repeat;
}

.grip button {
    display: block;
    width: 12px;
    height: 12px;
    margin-top: -2px;
    border: 1px solid #bbb;
    background: #e6e6e6;
}

.grip svg {
    width: 8px;
    height: 8px;
    margin: 1px;
}

.plot {
    flex: 1;
    min-width: 0;
    width: 0;
    height: 100%;
    overflow: hidden;
}

.plot text {
    font-family: Roboto, "Liberation Sans", sans-serif;
    font-size: 12px;
}

/* marker table below graph 1 */
.markers {
    flex: none;
    background: #fff;
    text-align: center;
    border-top: 1px solid #a8a8a8;
}

.markers th, .markers td {
    height: 21px;
    padding: 0 3px;
    overflow: hidden;
    white-space: nowrap;
    border-right: 1px solid #a0a0a0;
    border-bottom: 1px solid #a0a0a0;
}

.markers th {
    height: 24px;
    font-weight: normal;
    border-color: #e0e0e0;
}

.markers .left {
    text-align: left;
}

.markers .picked {
    background: #e0e0e0;
}

.markers .plain {
    background: #fff;
    padding: 0;
    border-bottom: none;
}

.markers svg {
    width: 15px;
    height: 11px;
    margin-left: -1px;
}

.c-arrow { width: 19px; }
.c-eye { width: 21px; }
.c-name { width: 164px; }
.c-val { width: 65px; }

.blue { color: #00f; }
.red { color: #f00; }

.mark {
    display: inline-block;
    border: 5px solid transparent;
    border-left-color: #000;
    border-right: none;
    vertical-align: middle;
}

/* event log */
.event-log {
    flex: 556 1 0;
    border-left: 1px solid #a0a0a0;
}

.log-body {
    display: flex;
    flex: 1;
    min-height: 0;
    overflow: hidden;
}

.log {
    flex: 1;
    width: 0;
    align-self: flex-start;
}

.log th {
    height: 25px;
    padding: 0 4px;
    text-align: left;
    font-weight: normal;
    border-right: 1px solid #e4e4e4;
}

.log td {
    height: 20px;
    padding: 3px 4px;
    line-height: 14px;
    vertical-align: top;
}

.log .tall td {
    height: 60px;
}

.log td svg {
    width: 16px;
    height: 16px;
    margin: -1px 0 -1px 14px;
}

.pre {
    white-space: pre;
}

.sort {
    float: right;
    width: 8px;
    height: 9px;
    margin: 2px;
}

.c-type { width: 51px; }
.c-date { width: 126px; }

.vscroll {
    display: flex;
    flex-direction: column;
    width: 17px;
    margin-top: 25px;
    background: #f0f0f0;
}

.vthumb {
    height: 18px;
    margin-top: 2px;
    background: #cdcdcd;
}

.vscroll svg:last-child {
    margin-top: auto;
}

/* watch window */
.watch {
    flex: 648 1 0;
    border-left: 1px solid #a0a0a0;
    background: #f0f0f0;
}

.watch-body {
    display: flex;
    flex: 1;
    min-height: 0;
    padding: 5px 5px 0 4px;
    gap: 8px;
}

.watch-grid {
    flex: 1;
    border: 1px solid #8a8f98;
    border-bottom: none;
    background: #fff;
    overflow: hidden;
}

.watch-grid th {
    height: 24px;
    padding: 0 3px;
    font-weight: normal;
    text-align: left;
}

.watch-grid td {
    height: 22px;
    padding: 0 3px;
    border-right: 1px solid #a0a0a0;
    border-bottom: 1px solid #a0a0a0;
    white-space: nowrap;
}

.watch-grid td:last-child {
    border-right: none;
}

.watch-grid .picked td:nth-child(2) {
    background: #bfcddb;
}

.watch-grid td.gutter {
    padding: 0 0 0 7px;
    border: none;
    border-right: 1px solid #e0e0e0;
}

.c-mark { width: 18px; }
.c-signal { width: 207px; }

.watch-btns {
    display: flex;
    flex-direction: column;
    gap: 6px;
    width: 20px;
    padding-top: 22px;
    overflow: hidden;
}

.watch-btns button {
    flex: none;
    width: 20px;
    height: 20px;
    padding: 1px;
    border: 1px solid #adadad;
    background: #e1e1e1;
}

/* status bar */
.statusbar {
    display: flex;
    flex: none;
    height: 27px;
    padding-left: 435px;
    font-family: "Open Sans", sans-serif;
}

.status-part {
    display: flex;
    align-items: center;
    padding: 2px 0 0 3px;
    border-left: 1px solid #aaa;
}

.status-part svg {
    width: 17px;
    height: 16px;
    margin-right: 4px;
}

.hd-part {
    width: 346px;
}

.pda-part {
    flex: 1;
}

.hd-badge {
    width: 16px;
    height: 18px;
    margin-right: 4px;
    border-radius: 2px;
    background: #f39200;
    color: #fff;
    font-size: 9px;
    font-weight: bold;
    line-height: 18px;
    text-align: center;
}

.colon { width: 13px; }
.user { width: 51px; }
.host { width: 120px; }

.pda-part .user { width: 50px; }
.pda-part .host { width: 86px; }

.rate {
    width: 95px;
    padding-left: 5px;
}

.resize {
    align-self: flex-end;
    width: 12px;
    height: 12px;
    margin: 0 2px;
}
```

FILE: charts.js
```javascript
const BLUE = '#0000ff';
const RED = '#ff0000';
const AXES = 58; // room for the value axes on the right

function el(parent, name, attrs, text) {
    const node = document.createElementNS('http://www.w3.org/2000/svg', name);
    for (const key in attrs) node.setAttribute(key, attrs[key]);
    if (text !== undefined) node.textContent = text;
    parent.appendChild(node);
    return node;
}

function line(svg, x1, y1, x2, y2, color, width, dash) {
    el(svg, 'path', { d: `M${x1} ${y1}L${x2} ${y2}`, stroke: color, 'stroke-width': width || 1, 'stroke-dasharray': dash || 'none' });
}

function rect(svg, x, y, w, h, fill) {
    el(svg, 'rect', { x, y, width: w, height: h, fill });
}

function poly(svg, pts, color, width) {
    el(svg, 'polyline', { points: pts.map(p => p.join(',')).join(' '), fill: 'none', stroke: color, 'stroke-width': width || 1.2 });
}

// plot background, grid and frame; all x and y are shares of the plot
function frame(id, bottom, xs, ys) {
    const svg = document.getElementById(id);
    svg.innerHTML = '';
    const box = svg.getBoundingClientRect();
    const w = Math.round(box.width) - AXES;
    const h = Math.round(box.height) - bottom;
    rect(svg, 0, 0, w + 12, h, '#fff');
    xs.forEach(x => line(svg, Math.round(x * w), 0, Math.round(x * w), h, '#dedede', 2));
    ys.forEach(y => line(svg, 0, Math.round(y * h), w, Math.round(y * h), '#dedede', 2));
    return { svg, w, h };
}

function closeFrame(c, ticks) {
    if (ticks) {
        line(c.svg, 0, c.h + .5, c.w, c.h + .5, '#333', 1.5);
        ticks.forEach(x => line(c.svg, Math.round(x * c.w), c.h, Math.round(x * c.w), c.h + 5, '#333', 1.5));
    }
    line(c.svg, c.w + .5, 0, c.w + .5, c.h, '#333', 1.5);
}

function timeLabels(c, list) {
    list.forEach(([x, label]) => el(c.svg, 'text', { x: Math.round(x * c.w), y: c.h + 17, 'text-anchor': 'middle', fill: '#222' }, label));
}

function legend(c, row, color, label, noDash) {
    const y = 23 + row * 15;
    if (!noDash) line(c.svg, 11, y - 4, 22, y - 4, color, 1);
    el(c.svg, 'text', { x: 27, y, fill: color }, label);
}

function valueAxis(c, offset, ticks, labels, color) {
    const x = c.w + offset + .5;
    line(c.svg, x, 0, x, c.h, '#222', 1.5);
    ticks.forEach(t => line(c.svg, x, Math.round(t * c.h) + .5, x + 5, Math.round(t * c.h) + .5, '#222', 1));
    labels.forEach(([t, label]) => {
        const y = Math.round(t * c.h);
        el(c.svg, 'text', { x: x + 13, y, transform: `rotate(-90 ${x + 13} ${y})`, 'text-anchor': 'middle', fill: color }, label);
    });
}

function steps(from, step, count) {
    return Array.from({ length: count }, (_, i) => from + i * step);
}

// two phase shifted cosines, filled to the zero line
function drawChart1() {
    const xs = steps(6 / 520, 26.05 / 520, 20);
    const ys = steps(1.5 / 142, 17.3 / 142, 9);
    const c = frame('chart1', 22, xs, ys);
    legend(c, 0, BLUE, '[0:21] cos(t()-(2*pi()*5/8)) (-0,6331)');
    legend(c, 1, RED, '[0:22] cos(t()-(2*pi()*6/8)) (-0,9950)');
    const zero = c.h / 2;
    [[192.5, BLUE], [233.5, RED]].forEach(([peak, color]) => {
        const pts = [];
        for (let x = 0; x <= c.w; x += 1) {
            pts.push([x, zero - Math.cos(2 * Math.PI * (x / c.w * 520 - peak) / 328) * (zero - 1.5)]);
        }
        const area = [[0, zero], ...pts, [c.w, zero]];
        el(c.svg, 'polygon', { points: area.join(' '), fill: color, 'fill-opacity': 0.64 });
        poly(c.svg, pts, color);
        line(c.svg, 0, zero, c.w, zero, color, 1);
    });
    [76 / 520, 192 / 520].forEach(m => {
        const x = Math.round(m * c.w);
        line(c.svg, x, 0, x, c.h, RED, 1.3, '5 3');
        line(c.svg, x, 0, x, 10, RED, 3);
        line(c.svg, x, c.h - 11, x, c.h, RED, 3);
    });
    closeFrame(c, xs);
    timeLabels(c, [[28 / 520, '11:08:04.5'], [84 / 520, '11:08:06.0'], [162 / 520, '11:08:07.5'], [241 / 520, '11:08:09.0'],
        [319 / 520, '11:08:10.5'], [397 / 520, '11:08:12.0'], [475 / 520, '11:08:13.5']]);
    rect(c.svg, c.w + 2, 1, 4, zero - 1, BLUE);
    rect(c.svg, c.w + 6, 24, 4, zero - 24, RED);
    const labels = [[12 / 142, '1,00'], [53 / 142, '0,25'], [105 / 142, '-0,50']];
    valueAxis(c, 12, ys, labels, BLUE);
    valueAxis(c, 33, ys, labels, RED);
}

const TIMES = ['11:08:55', '11:09:00', '11:09:05', '11:09:10', '11:09:15', '11:09:20', '11:09:25', '11:09:30'];

function drawChart2a() {
    const c = frame('chart2a', 0, steps(31 / 519, 64.7 / 519, 8), []);
    legend(c, 0, BLUE, '[23.22] CGL_Product start (0)', true);
    legend(c, 1, RED, '[23.24] CGL_Turnpoint (0)', true);
    el(c.svg, 'path', { d: 'M11 19h11M17 19v15h6', fill: 'none', stroke: BLUE });
    line(c.svg, 0, 40, c.w, 40, BLUE, 1.4);
    const pts = [[0, 54.5]];
    [[7, 46], [241, 279], [474, 513]].forEach(([from, to]) => {
        const a = Math.round(from / 519 * c.w) + .5;
        const b = Math.round(to / 519 * c.w) + .5;
        pts.push([a, 54.5], [a, 44.5], [b, 44.5], [b, 54.5]);
        el(c.svg, 'rect', { x: a, y: 44, width: b - a, height: 10, fill: RED, 'fill-opacity': 0.64 });
    });
    pts.push([c.w, 54.5]);
    poly(c.svg, pts, RED, 1);
    closeFrame(c);
    line(c.svg, c.w + 12.5, 0, c.w + 12.5, c.h, '#222', 1.5);
}

const voltage = [57,487, 80,465, 100,447, 108,450, 125,480, 140,530, 160,600, 175,665, 190,700, 205,730, 222,740, 240,785,
    262,820, 280,812, 300,792, 318,778, 335,740, 350,680, 365,620, 385,540, 400,485, 415,445, 428,430, 440,424, 455,430,
    470,475, 490,540, 510,570, 525,635, 540,675, 555,705, 570,722, 598,722, 610,700, 625,682, 640,700, 655,712, 670,695,
    685,665, 705,600, 720,550, 735,500, 745,500, 760,465, 775,455, 788,416, 805,420, 820,465, 840,545, 860,580, 880,605,
    895,635, 910,675, 932,723, 950,675, 965,660, 980,645, 1000,672, 1010,668, 1027,705, 1040,662, 1060,660, 1070,640,
    1085,645, 1105,635, 1120,620, 1140,590, 1160,535, 1170,540, 1185,510, 1197,495, 1210,520, 1230,535, 1250,590,
    1270,645, 1290,682, 1305,655, 1320,650, 1335,610, 1345,605, 1352,585, 1362,590, 1380,500, 1395,450, 1411,416];

function drawChart2b() {
    const xs = steps(31 / 519, 64.7 / 519, 8);
    const ys = steps(8.5 / 138, 13.6 / 138, 10);
    const c = frame('chart2b', 20, xs, ys);
    legend(c, 0, BLUE, '[23:6] CGL_Standardisation factor top (1,160 #)');
    legend(c, 1, RED, '[23:4] CGL_High voltage top (25,05585 kV)');
    const mid = Math.round(c.h / 2);
    line(c.svg, 0, mid, c.w, mid, BLUE, 1.4);
    const pts = [];
    let last = null;
    for (let x = 0, i = 0; x <= c.w; x += 2) {
        const t = 57 + x / c.w * 1354;
        while (i < voltage.length - 4 && voltage[i + 2] < t) i += 2;
        const part = (t - voltage[i]) / (voltage[i + 2] - voltage[i]);
        const level = voltage[i + 1] + part * (voltage[i + 3] - voltage[i + 1]);
        const y = Math.round((level - 418 + Math.sin(x * 0.7) * 3) / 412 * c.h / 2) * 2 + .5;
        if (last !== null) pts.push([x + .5, last]);
        pts.push([x + .5, y]);
        last = y;
    }
    poly(c.svg, pts, RED, 1);
    closeFrame(c, xs);
    timeLabels(c, TIMES.map((t, i) => [xs[i], t]));
    rect(c.svg, c.w + 2, c.h / 2, 4, c.h / 2, BLUE);
    rect(c.svg, c.w + 6, 0, 4, c.h, RED);
    valueAxis(c, 12, ys, [[9 / 138, '1,6'], [36 / 138, '1,4'], [63 / 138, '1,2'], [91 / 138, '1,0'], [118 / 138, '0,8']], BLUE);
    valueAxis(c, 33, steps(3 / 138, 24.5 / 138, 6), [[19 / 138, '25,055'], [76 / 138, '25,040']], RED);
}

// recorded zinc coating, first and second half of the buffer
const zincA = [65,705, 70,750, 78,655, 83,730, 92,660, 100,655, 107,575, 113,765, 122,750, 130,695, 141,758, 147,658,
    158,770, 166,628, 170,740, 180,508, 194,772, 203,640, 207,710, 214,605, 221,690, 226,645, 234,565, 243,710, 253,515,
    258,735, 264,818, 275,655, 282,735, 292,550, 302,750, 310,660, 316,728, 322,555, 327,680, 333,500, 344,690, 352,530,
    357,692, 366,670, 375,795, 382,652, 389,795, 401,432, 408,660, 416,437, 427,710, 443,625, 453,665, 458,592, 468,665,
    478,508, 491,768, 500,597, 507,708, 515,510, 521,540, 526,512, 532,770, 550,578, 558,620, 566,680, 576,568, 587,702,
    594,562, 603,670, 613,466, 620,665, 630,420, 641,697, 650,595, 660,628, 674,455, 684,585, 692,560, 700,585, 715,455,
    721,570, 737,420, 746,510, 752,428, 765,635, 775,600, 783,508, 790,555, 794,528, 798,610, 805,580, 811,430, 815,555,
    822,540, 832,462, 838,585, 848,438, 857,540, 864,460, 873,376, 885,543, 896,415, 902,510, 908,470, 914,555, 923,445,
    930,510, 944,602, 950,455, 961,607, 969,352, 975,525, 984,412, 991,530, 1000,376, 1005,450, 1010,395, 1014,480,
    1020,420, 1025,346, 1029,346, 1036,505, 1046,297, 1057,543, 1063,485, 1068,508, 1075,450, 1087,543, 1094,375,
    1098,520, 1107,530, 1112,415, 1123,470, 1131,340, 1138,460, 1145,480, 1153,570, 1163,332, 1171,468, 1182,428,
    1196,430, 1202,418, 1210,617, 1222,462, 1228,460, 1234,372, 1243,510, 1248,372, 1256,505, 1264,395, 1270,490,
    1282,517, 1292,475, 1300,485, 1304,297, 1309,405, 1315,430, 1320,515, 1327,637, 1337,533, 1346,628, 1355,580,
    1363,410, 1373,660, 1378,562, 1384,680, 1394,720, 1406,548, 1412,630, 1418,630, 1426,727, 1437,505, 1441,660,
    1448,562, 1455,600, 1462,585, 1468,733, 1480,362, 1487,600, 1494,645, 1510,478, 1517,490, 1523,655, 1528,688,
    1533,590, 1540,708, 1548,456, 1553,750, 1563,525];
const zincB = [0,585, 5,757, 15,608, 28,727, 36,556, 45,675, 55,447, 68,692, 76,530, 81,685, 91,368, 97,760, 103,776,
    110,622, 120,608, 128,475, 134,692, 141,650, 150,402, 157,632, 170,420, 178,570, 185,580, 190,505, 192,590, 201,433,
    206,570, 213,455, 222,530, 230,697, 240,475, 250,505, 254,398, 260,390, 267,222, 272,480, 278,540, 286,420, 293,490,
    303,430, 310,490, 318,417, 326,485, 336,297, 342,395, 350,420, 354,553, 358,395, 370,582, 377,470, 383,487, 392,437,
    404,610, 411,352, 420,508, 426,390, 435,510, 445,372, 456,578, 466,402, 471,480, 478,440, 487,425, 492,317, 498,485,
    505,460, 515,535, 520,382, 525,525, 532,370, 545,602, 552,520, 558,445, 564,515, 570,455, 578,495, 585,470, 598,555,
    608,465, 616,440, 625,652, 635,475, 650,510, 654,378, 664,500, 672,620, 680,405, 686,430, 692,612, 700,530, 710,635,
    717,555, 722,625, 728,515, 733,512, 740,662, 750,575, 758,467, 765,605, 770,535, 782,692, 790,490, 798,520, 811,440,
    820,675, 830,548, 836,575, 845,712, 854,508, 863,585, 870,545, 880,540, 888,705, 900,552, 920,690, 932,480, 940,695,
    951,392, 968,770, 976,575, 982,715, 990,475, 1002,722, 1014,562, 1023,660, 1029,645, 1037,755, 1045,532, 1052,697,
    1058,595, 1063,695, 1069,528, 1080,772, 1089,575, 1094,655, 1099,568, 1107,748, 1120,660, 1130,685, 1143,622,
    1149,712, 1160,640, 1166,412, 1178,660, 1183,587, 1188,745, 1197,565, 1205,645, 1213,672, 1221,518, 1228,758,
    1236,585, 1246,770, 1254,645, 1262,725, 1271,610, 1282,790, 1291,515, 1298,682, 1304,658, 1311,765, 1320,610,
    1325,742, 1333,433, 1339,600, 1348,660, 1355,505, 1362,710, 1369,782, 1375,710, 1380,725, 1388,378, 1396,685,
    1404,625, 1412,580];
const position = [[0, 206], [11, 209], [106, 209], [116, 207], [126, 203], [205, 161], [346, 88], [485, 16], [501, 7],
    [511, 4], [524, 2], [616, 2], [626, 5], [651, 18], [767, 78], [908, 151], [981, 190], [1004, 202], [1023, 208], [1126, 208]];

function pairs(list, offset, scale) {
    const out = [];
    for (let i = 0; i < list.length; i += 2) out.push([offset + list[i] / scale, (list[i + 1] - 189) / 3]);
    return out;
}

function drawChart3() {
    const xs = steps(64.5 / 1126, 140.6 / 1126, 8);
    const ys = steps(16.5 / 212, 17.6 / 212, 12);
    const c = frame('chart3', 21, xs, ys);
    const fit = p => [(p[0] / 1126 * c.w).toFixed(1), (p[1] / 212 * c.h).toFixed(1)];
    legend(c, 0, RED, '[23:1] CGL_Actual cross position (-592,71 mm)');
    legend(c, 1, BLUE, '[23:2] CGL_Measurement value Zn top (40,49 g/m²)');
    poly(c.svg, position.map(fit), RED);
    poly(c.svg, pairs(zincA, -24, 2.613).concat(pairs(zincB, 576, 2.57)).map(fit), BLUE);
    closeFrame(c, xs);
    timeLabels(c, TIMES.map((t, i) => [xs[i], t]));
    rect(c.svg, c.w + 2, c.h * 104 / 212, 4, c.h * 105 / 212, RED);
    rect(c.svg, c.w + 6, c.h * 144 / 212, 4, c.h * 68 / 212, BLUE);
    valueAxis(c, 12, ys, [[34 / 212, '400'], [69 / 212, '200'], [105 / 212, '0'], [139 / 212, '-200'], [173 / 212, '-400'], [201 / 212, '-600']], RED);
    valueAxis(c, 33, steps(2 / 212, 21.9 / 212, 10), ['47', '46', '45', '44', '43', '42', '41', '40', '39', '38'].map((v, i) => [(i ? 2 + i * 21.9 : 7) / 212, v]), BLUE);
}

function drawAll() {
    drawChart1();
    drawChart2a();
    drawChart2b();
    drawChart3();
}

window.addEventListener('resize', drawAll);
drawAll();
```
